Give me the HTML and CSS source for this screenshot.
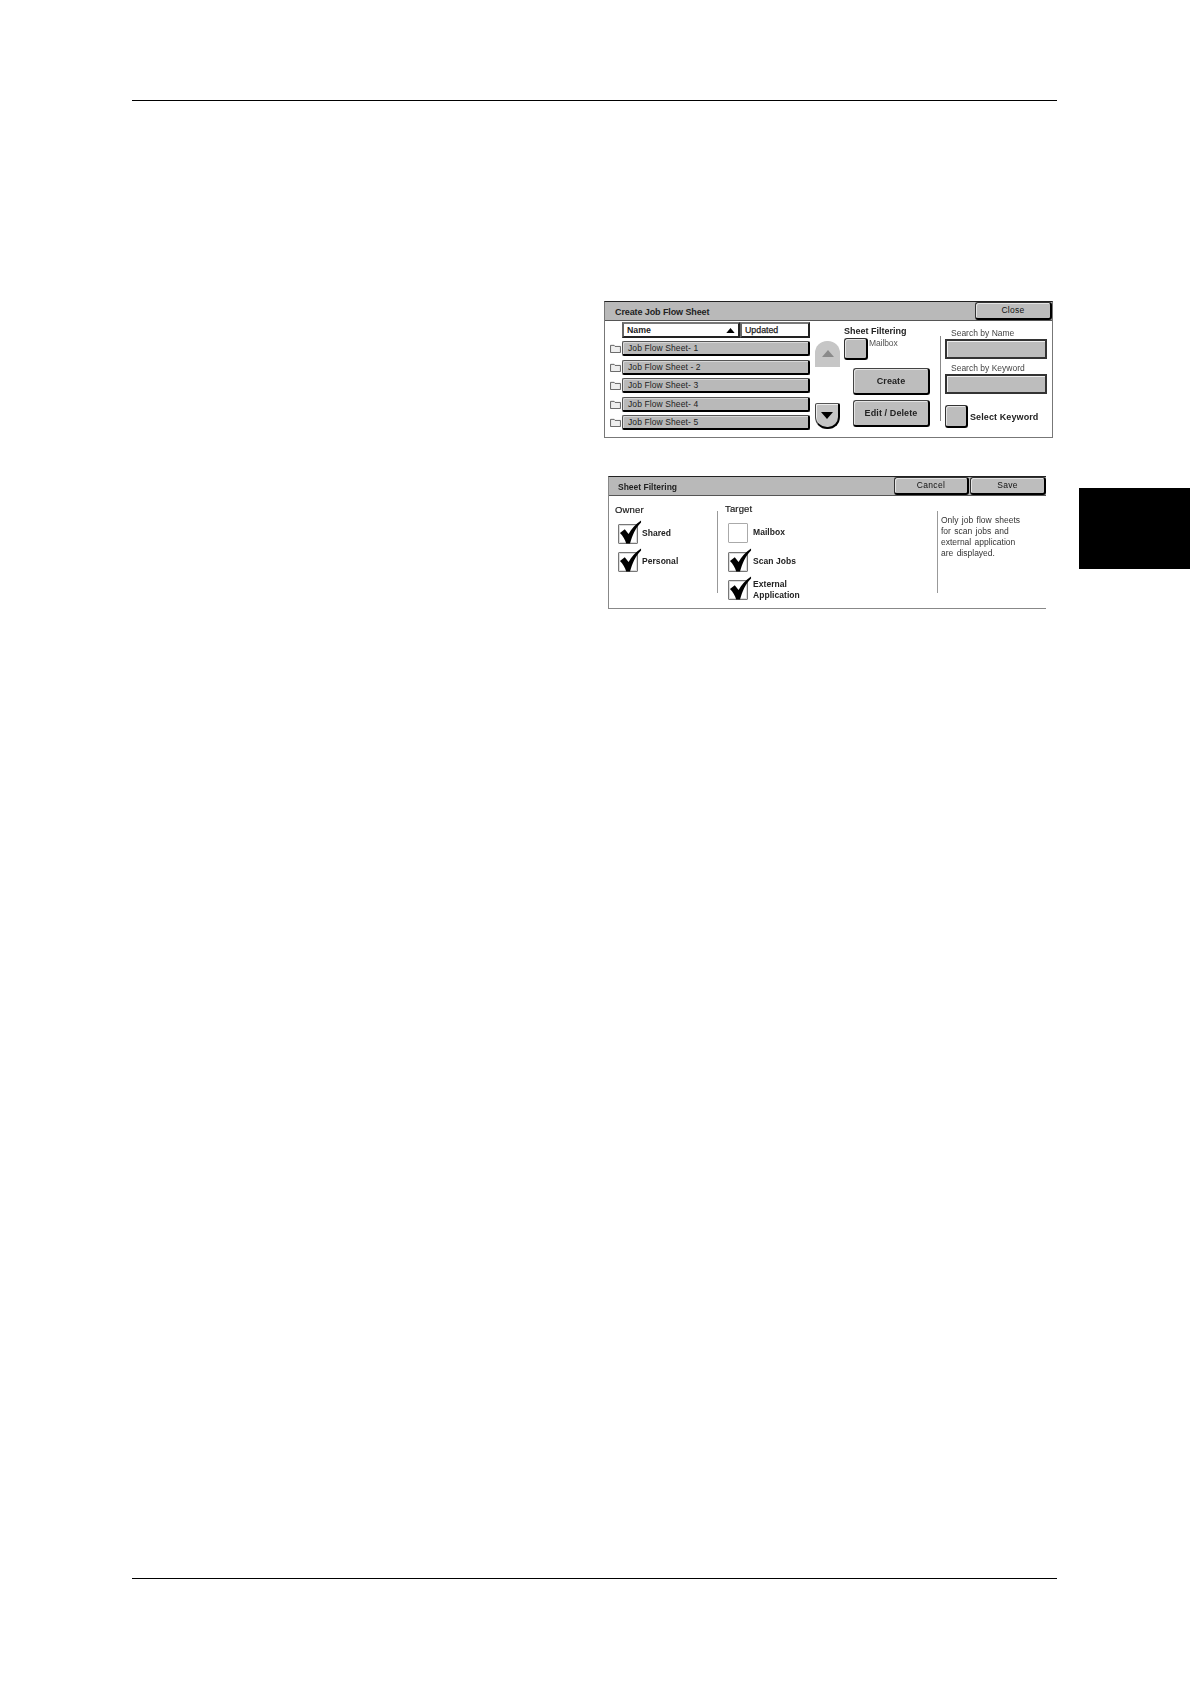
FILE: index.html
```html
<!DOCTYPE html>
<html lang="en">
<head>
<meta charset="utf-8">
<title>Job Flow Sheet</title>
<link rel="stylesheet" href="styles.css">
</head>
<body>
<div class="page">
  <div class="rule rule-top"></div>
  <div class="panels">
    <section class="panel panel-create">
      <header class="bar">
        <h2 class="bar-title">Create Job Flow Sheet</h2>
        <button class="bar-btn btn-close">Close</button>
      </header>
      <div class="create-body">
        <div class="list">
          <div class="list-head">
            <div class="head-cell head-name"><span>Name</span><svg class="sort" viewBox="0 0 10 6"><path d="M5 0 10 6H0z"/></svg></div>
            <div class="head-cell head-updated">Updated</div>
          </div>
          <div class="list-rows">
            <div class="list-row"><svg class="folder" viewBox="0 0 12 10"><path d="M.5 9.5V1.5h4l1 1.2h6v6.8z"/></svg><div class="row-btn">Job Flow Sheet- 1</div></div>
            <div class="list-row"><svg class="folder" viewBox="0 0 12 10"><path d="M.5 9.5V1.5h4l1 1.2h6v6.8z"/></svg><div class="row-btn">Job Flow Sheet - 2</div></div>
            <div class="list-row"><svg class="folder" viewBox="0 0 12 10"><path d="M.5 9.5V1.5h4l1 1.2h6v6.8z"/></svg><div class="row-btn">Job Flow Sheet- 3</div></div>
            <div class="list-row"><svg class="folder" viewBox="0 0 12 10"><path d="M.5 9.5V1.5h4l1 1.2h6v6.8z"/></svg><div class="row-btn">Job Flow Sheet- 4</div></div>
            <div class="list-row"><svg class="folder" viewBox="0 0 12 10"><path d="M.5 9.5V1.5h4l1 1.2h6v6.8z"/></svg><div class="row-btn">Job Flow Sheet- 5</div></div>
          </div>
        </div>
        <div class="scroll">
          <div class="scroll-btn scroll-up"><svg viewBox="0 0 12 7"><path d="M6 0 12 7H0z"/></svg></div>
          <div class="scroll-btn scroll-down"><svg viewBox="0 0 12 7"><path d="M6 7 12 0H0z"/></svg></div>
        </div>
        <div class="filter">
          <div class="filter-title">Sheet Filtering</div>
          <div class="filter-line">
            <div class="square-btn"></div>
            <span class="filter-value">Mailbox</span>
          </div>
          <div class="action-btn action-create">Create</div>
          <div class="action-btn action-edit">Edit / Delete</div>
        </div>
        <div class="search">
          <div class="search-label">Search by Name</div>
          <div class="search-field"></div>
          <div class="search-label search-label-2">Search by Keyword</div>
          <div class="search-field"></div>
          <div class="keyword-line">
            <div class="square-btn square-keyword"></div>
            <span class="keyword-text">Select Keyword</span>
          </div>
        </div>
      </div>
    </section>

    <section class="panel panel-filter">
      <header class="bar bar-filter">
        <h2 class="bar-title">Sheet Filtering</h2>
        <button class="bar-btn btn-cancel">Cancel</button>
        <button class="bar-btn btn-save">Save</button>
      </header>
      <div class="filter-body">
        <div class="col col-owner">
          <h3 class="col-title">Owner</h3>
          <div class="check-line">
            <span class="box"><svg class="tick" viewBox="0 0 24 24"><path d="M1 13 6 9 10 14C13 8.500 17 4 23 0V2C17 8 14 15 11.500 24H7.500C6.500 20 4 16 1 13z"/></svg></span>
            <span class="check-text">Shared</span>
          </div>
          <div class="check-line">
            <span class="box"><svg class="tick" viewBox="0 0 24 24"><path d="M1 13 6 9 10 14C13 8.500 17 4 23 0V2C17 8 14 15 11.500 24H7.500C6.500 20 4 16 1 13z"/></svg></span>
            <span class="check-text">Personal</span>
          </div>
        </div>
        <div class="col col-target">
          <h3 class="col-title">Target</h3>
          <div class="check-line">
            <span class="box box-empty"></span>
            <span class="check-text">Mailbox</span>
          </div>
          <div class="check-line">
            <span class="box"><svg class="tick" viewBox="0 0 24 24"><path d="M1 13 6 9 10 14C13 8.500 17 4 23 0V2C17 8 14 15 11.500 24H7.500C6.500 20 4 16 1 13z"/></svg></span>
            <span class="check-text">Scan Jobs</span>
          </div>
          <div class="check-line">
            <span class="box"><svg class="tick" viewBox="0 0 24 24"><path d="M1 13 6 9 10 14C13 8.500 17 4 23 0V2C17 8 14 15 11.500 24H7.500C6.500 20 4 16 1 13z"/></svg></span>
            <span class="check-text check-text-2">External<br>Application</span>
          </div>
        </div>
        <p class="note">Only job flow sheets<br>for scan jobs and<br>external application<br>are displayed.</p>
      </div>
    </section>
  </div>
  <div class="tab"></div>
  <div class="rule rule-bottom"></div>
</div>
</body>
</html>
```
FILE: styles.css
```css
* { box-sizing: border-box; }
html, body { margin: 0; padding: 0; background: #fff; }
body { font-family: "Liberation Sans", Arial, sans-serif; color: #111; }

.page {
  width: 1190px;
  height: 1684px;
  overflow: hidden;
  display: grid;
  grid-template-columns: 132px 925px 22px 111px;
  grid-template-rows: 100px 1.3px 386.7px 81px 1009px 1.5px 1fr;
}
.rule { background: #000; grid-column: 2; }
.rule-top { grid-row: 2; }
.rule-bottom { grid-row: 6; }
.tab { grid-column: 4; grid-row: 4; background: #000; }

.panels {
  grid-column: 2;
  grid-row: 3 / 6;
  padding: 199.7px 0 0 472px;
  filter: blur(0.35px);
}

.panel { background: #fff; }
.panel-create {
  width: 449px;
  height: 137px;
  border: 1px solid #777;
  border-top: 1px solid #222;
}
.panel-filter {
  width: 438px;
  height: 133px;
  margin: 38px 0 0 4px;
  border-left: 1px solid #888;
  border-bottom: 1px solid #888;
  border-top: 1px solid #222;
}

.bar {
  height: 19px;
  background: #b9b9b9;
  display: flex;
  align-items: stretch;
  border-bottom: 1px solid #555;
}
.bar-title {
  flex: 1;
  margin: 0;
  padding: 4.5px 0 0 10px;
  font-size: 9px;
  font-weight: bold;
  line-height: 12px;
  letter-spacing: -.1px;
  color: #222;
}
.bar-filter .bar-title { font-size: 8.5px; letter-spacing: 0; padding-left: 9px; }
.bar-btn {
  margin: 0;
  padding: 0;
  font: normal 8.5px/12px "Liberation Sans", Arial, sans-serif;
  letter-spacing: .3px;
  color: #111;
  background: #bdbdbd;
  border: 1px solid #333;
  border-right: 2px solid #000;
  border-bottom: 2px solid #000;
  border-radius: 3px;
  box-shadow: inset 1px 1px #e4e4e4;
}
.btn-close { width: 77px; }
.btn-cancel { width: 75px; }
.btn-save { width: 76px; margin-left: 1px; }

/* Create panel */
.create-body {
  height: 116px;
  display: flex;
  padding-left: 5px;
}
.list { width: 200px; padding-top: 1.5px; }
.list-head {
  display: flex;
  height: 17px;
  margin-left: 12px;
}
.head-cell {
  height: 16px;
  background: #fff;
  border: 2px solid #222;
  border-top-color: #777;
  border-left-color: #666;
  font-size: 8.8px;
  line-height: 12px;
  font-weight: bold;
  padding-left: 3px;
  color: #222;
}
.head-name {
  width: 118px;
  display: flex;
  align-items: center;
  justify-content: space-between;
  padding-right: 3px;
}
.head-updated { width: 70px; font-weight: normal; -webkit-text-stroke: .25px #222; }
.sort { width: 9px; height: 5px; fill: #000; }

.list-rows { display: grid; gap: 3.6px; margin-top: 1.5px; }
.list-row { display: flex; align-items: center; height: 15px; }
.folder {
  width: 11px;
  height: 9px;
  flex: none;
  margin-right: 1px;
  fill: #eee;
  stroke: #555;
  stroke-width: 1;
}
.row-btn {
  width: 188px;
  height: 15px;
  background: #b9b9b9;
  border: 1px solid #555;
  border-right: 2px solid #000;
  border-bottom: 2px solid #000;
  border-radius: 2px;
  box-shadow: inset 1px 1px #d8d8d8;
  font-size: 8.5px;
  line-height: 12px;
  letter-spacing: .1px;
  padding-left: 5px;
  color: #222;
}

.scroll {
  width: 25px;
  margin-left: 5px;
  padding-top: 20px;
  display: flex;
  flex-direction: column;
  gap: 36px;
}
.scroll-btn {
  width: 25px;
  height: 26px;
  display: flex;
  align-items: center;
  justify-content: center;
}
.scroll-btn svg { width: 12px; height: 7px; }
.scroll-up {
  background: #c6c6c6;
  border-radius: 12px 12px 0 0;
}
.scroll-up svg { fill: #8a8a8a; }
.scroll-down {
  background: #c4c4c4;
  border: 1px solid #444;
  border-right: 2px solid #000;
  border-bottom: 2px solid #000;
  border-top-color: #555;
  border-radius: 2px 2px 12px 12px;
  box-shadow: inset 1px 1px #eee;
}
.scroll-down svg { fill: #000; }

.filter { width: 100px; margin-left: 4px; }
.filter-title {
  margin-top: 4px;
  font-size: 9px;
  line-height: 12px;
  font-weight: bold;
  color: #222;
  height: 12px;
  white-space: nowrap;
}
.filter-line { display: flex; align-items: flex-start; margin-top: 1px; }
.square-btn {
  width: 24px;
  height: 22px;
  flex: none;
  background: #bdbdbd;
  border: 1px solid #333;
  border-right: 2px solid #000;
  border-bottom: 2px solid #000;
  border-radius: 3px;
  box-shadow: inset 1px 1px #e4e4e4;
}
.filter-value { font-size: 8.5px; line-height: 10px; letter-spacing: -.1px; color: #555; margin-left: 1px; }
.action-btn {
  width: 77px;
  height: 27px;
  margin-left: 9px;
  padding-top: 1px;
  background: #bdbdbd;
  border: 1px solid #444;
  border-right: 2px solid #000;
  border-bottom: 2px solid #000;
  border-radius: 3px;
  box-shadow: inset 1px 1px #e4e4e4;
  display: flex;
  align-items: center;
  justify-content: center;
  font-size: 9px;
  font-weight: bold;
  letter-spacing: .1px;
  color: #222;
}
.action-create { margin-top: 8px; }
.action-edit { margin-top: 5px; }

.search {
  width: 106px;
  height: 85px;
  margin: 15px 0 0 -4px;
  padding-left: 4px;
  border-left: 1px solid #888;
}
.search-label {
  font-size: 8.5px;
  line-height: 12px;
  padding-left: 6px;
  margin-top: -9px;
  color: #444;
}
.search-label-2 { margin-top: 3px; }
.search-field {
  width: 102px;
  height: 20px;
  background: #bdbdbd;
  border: 2px solid #333;
  box-shadow: inset 1px 1px #eee;
}
.keyword-line { display: flex; align-items: center; margin-top: 11px; }
.square-keyword { width: 23px; height: 23px; }
.keyword-text { padding-top: 1px; font-size: 9px; font-weight: bold; letter-spacing: .1px; margin-left: 2px; color: #222; white-space: nowrap; }

/* Filter panel */
.filter-body { display: flex; height: 112px; }
.col-owner { width: 108px; height: 100%; padding: 8px 0 0 6px; }
.col-target { width: 220px; height: 82px; margin-top: 15px; padding-left: 7px; border-left: 1px solid #999; }
.col-title { margin: 0; font-size: 9.5px; line-height: 12px; font-weight: normal; letter-spacing: .15px; color: #222; -webkit-text-stroke: .2px #222; }
.col-target .col-title { margin-top: -8px; }
.check-line { display: flex; align-items: center; height: 20px; margin: 8.500px 0 0 3px; }
.col-owner .check-line:first-of-type { margin-top: 8px; }
.box {
  position: relative;
  width: 20px;
  height: 20px;
  flex: none;
  background: #fff;
  border: 1px solid #777;
  border-radius: 1px;
  box-shadow: inset 0 0 0 1px #ddd;
}
.box-empty { border-color: #aaa; box-shadow: none; }
.tick { position: absolute; left: 0; bottom: -1px; width: 23px; height: 24px; fill: #000; }
.check-text { margin: -2px 0 0 4px; font-size: 8.5px; line-height: 10.500px; font-weight: bold; color: #222; letter-spacing: .05px; white-space: nowrap; }
.col-target .check-text { margin-left: 5px; }
.col-target .check-text-2 { margin-top: -1px; }
.note {
  margin: 15px 0 0;
  padding: 4px 0 0 3px;
  height: 82px;
  border-left: 1px solid #999;
  font-size: 8.5px;
  line-height: 10.900px;
  word-spacing: 1px;
  color: #333;
  white-space: nowrap;
}
```
